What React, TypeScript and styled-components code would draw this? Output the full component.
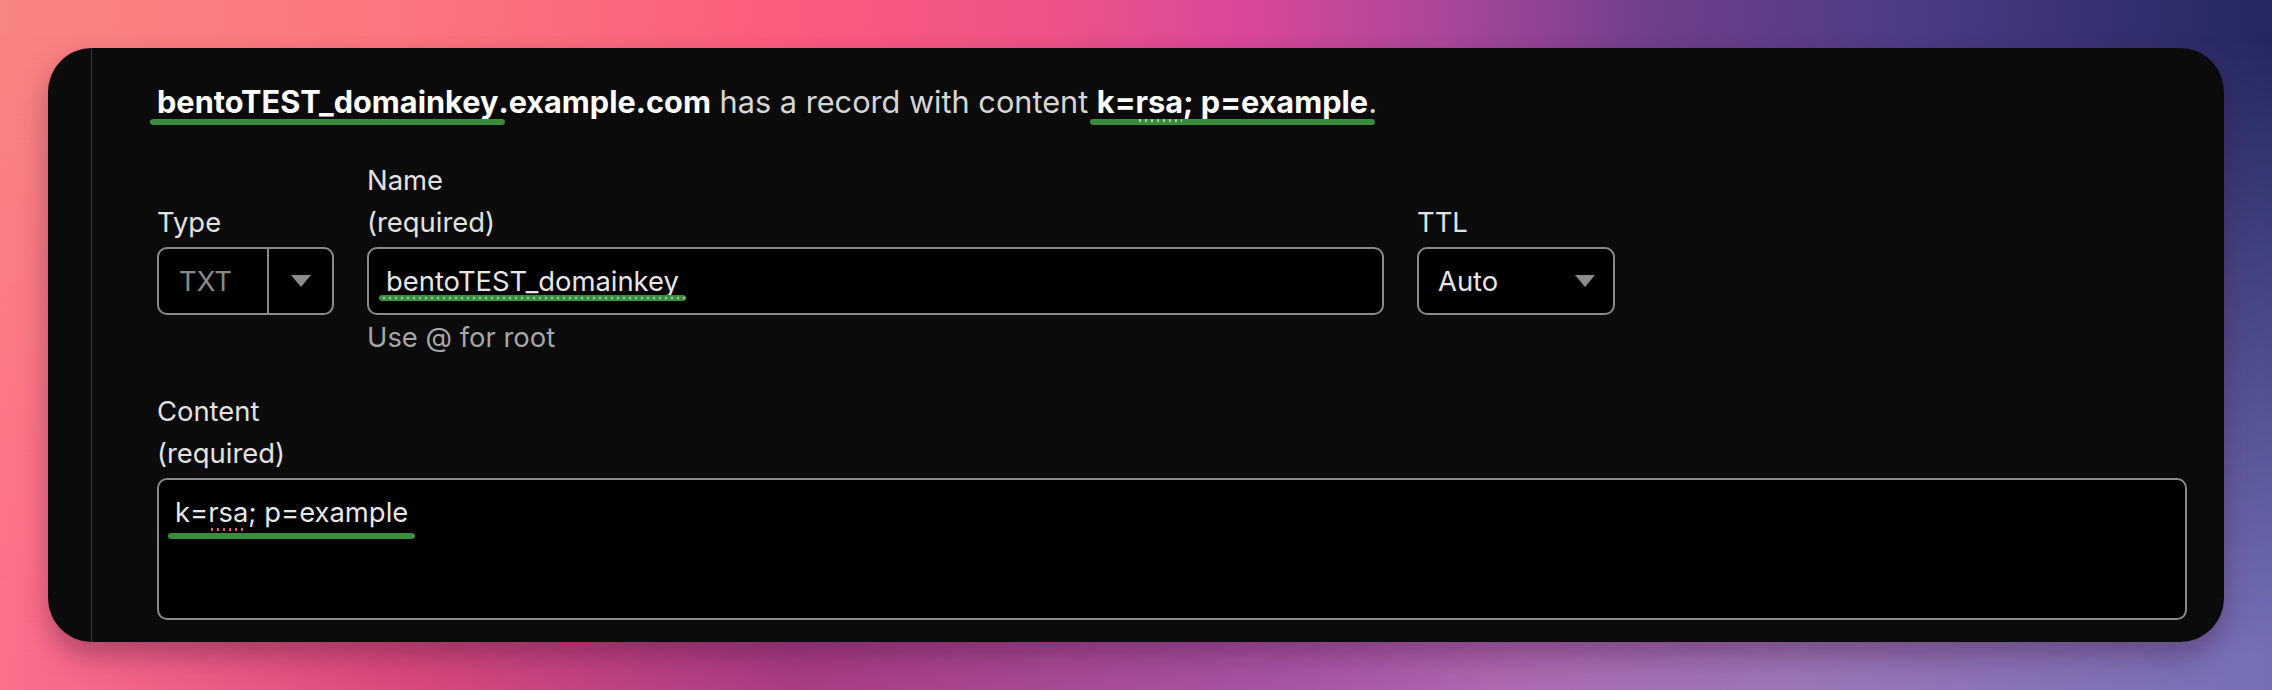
import React from "react";
import styled, { createGlobalStyle } from "styled-components";

const GlobalStyle = createGlobalStyle`
  html, body {
    margin: 0;
    padding: 0;
  }
  body {
    font-family: "Inter", "Noto Sans", "Liberation Sans", sans-serif;
    -webkit-font-smoothing: antialiased;
  }
`;

const Backdrop = styled.div`
  position: relative;
  width: 2272px;
  height: 690px;
  box-sizing: border-box;
  padding: 48px;
  background: linear-gradient(
    90deg,
    #f88580 0%,
    #fb757e 18%,
    #fb5b7d 35%,
    #ee5286 46%,
    #d9489a 55%,
    #a8479a 64%,
    #6e3f8a 73%,
    #4c3c85 84%,
    #232860 100%
  );

  &::before {
    content: "";
    position: absolute;
    inset: 0;
    background: linear-gradient(
      90deg,
      #fe6f8c 0%,
      #d9497d 18%,
      #a83d85 35%,
      #a855a5 57%,
      #ad68b0 66%,
      #9a76b6 79%,
      #7570b6 100%
    );
    -webkit-mask-image: linear-gradient(180deg, transparent 5%, #000 95%);
    mask-image: linear-gradient(180deg, transparent 5%, #000 95%);
  }
`;

const Card = styled.div`
  position: relative;
  z-index: 1;
  height: 100%;
  box-sizing: border-box;
  padding-left: 43px;
  background: #0b0b0b;
  border-radius: 44px;
  overflow: hidden;
  box-shadow: 0 14px 28px rgba(60, 10, 50, 0.35);
`;

const Panel = styled.div`
  height: 100%;
  box-sizing: border-box;
  border-left: 1px solid #3a3a3a;
  padding: 33px 37px 0 65px;
  font-size: 27.4px;
  line-height: 42px;
  color: #e2e2e2;
`;

const Headline = styled.p`
  margin: 0;
  font-size: 30.7px;
  color: #d6d6d6;
  white-space: nowrap;
`;

const Strong = styled.strong`
  color: #ffffff;
  font-weight: 700;
`;

const Marked = styled.span<{ $drop: number; $dotted?: boolean }>`
  position: relative;

  &::after {
    content: "";
    position: absolute;
    left: -7px;
    right: -7px;
    bottom: ${(p) => -p.$drop}px;
    height: 6px;
    border-radius: 3px;
    background: ${(p) =>
      p.$dotted
        ? "radial-gradient(circle, #86c98a 1.2px, transparent 1.7px) 2px 50% / 6px 6px repeat-x, #3a8c3e"
        : "#3a8c3e"};
  }
`;

const Spell = styled.span<{ $tone: string }>`
  position: relative;

  &::before {
    content: "";
    position: absolute;
    z-index: 1;
    left: 1px;
    right: 1px;
    bottom: -2px;
    height: 3px;
    background: radial-gradient(circle, ${(p) => p.$tone} 1.1px, transparent 1.5px) 0 0 / 6px 3px repeat-x;
  }
`;

const FieldGrid = styled.div`
  margin-top: 36px;
  display: grid;
  grid-template-columns: 177px 1017px 198px;
  column-gap: 33px;
`;

const Label = styled.label`
  display: block;
  align-self: end;
  margin-bottom: 4px;
  color: #e2e2e2;
`;

const Line = styled.span`
  display: block;
`;

const Box = styled.div`
  box-sizing: border-box;
  height: 68px;
  display: flex;
  align-items: center;
  background: #000;
  border: 2px solid #8a8a8a;
  border-radius: 10px;
  color: #e6e6e6;
`;

const SelectValue = styled.div<{ $muted?: boolean }>`
  flex: 1;
  padding-left: ${(p) => (p.$muted ? 20 : 19)}px;
  color: ${(p) => (p.$muted ? "#8a8a8a" : "#e6e6e6")};
`;

const Caret = styled.div<{ $split?: boolean }>`
  align-self: stretch;
  width: ${(p) => (p.$split ? "63px" : "auto")};
  display: flex;
  align-items: center;
  justify-content: center;
  border-left: ${(p) => (p.$split ? "2px solid #8a8a8a" : "none")};
  padding-right: ${(p) => (p.$split ? 0 : 18)}px;
`;

const TextValue = styled.div`
  padding-left: 17px;
  white-space: nowrap;
`;

const Hint = styled.div`
  grid-column: 2;
  margin-top: 1px;
  color: #a6a6a6;
`;

const ContentField = styled.div`
  margin-top: 32px;
`;

const Area = styled.div`
  box-sizing: border-box;
  height: 142px;
  padding: 11px 16px;
  background: #000;
  border: 2px solid #8a8a8a;
  border-radius: 10px;
  color: #e6e6e6;
`;

const Triangle = () => (
  <svg width="20" height="12" viewBox="0 0 20 12">
    <polygon points="0,0 20,0 10,12" fill="#8c8c8c" />
  </svg>
);

export default function App() {
  return (
    <>
      <GlobalStyle />
      <Backdrop>
        <Card>
          <Panel>
            <Headline>
              <Strong>
                <Marked $drop={5}>bentoTEST_domainkey</Marked>.example.com
              </Strong>{" "}
              has a record with content{" "}
              <Strong>
                <Marked $drop={5}>
                  k=<Spell $tone="#9fd49f">rsa</Spell>; p=example
                </Marked>
              </Strong>
              .
            </Headline>

            <FieldGrid>
              <Label>Type</Label>
              <Label>
                <Line>Name</Line>
                <Line>(required)</Line>
              </Label>
              <Label>TTL</Label>

              <Box>
                <SelectValue $muted>TXT</SelectValue>
                <Caret $split>
                  <Triangle />
                </Caret>
              </Box>
              <Box>
                <TextValue>
                  <Marked $drop={3} $dotted>
                    bentoTEST_domainkey
                  </Marked>
                </TextValue>
              </Box>
              <Box>
                <SelectValue>Auto</SelectValue>
                <Caret>
                  <Triangle />
                </Caret>
              </Box>

              <Hint>Use @ for root</Hint>
            </FieldGrid>

            <ContentField>
              <Label>
                <Line>Content</Line>
                <Line>(required)</Line>
              </Label>
              <Area>
                <Marked $drop={10}>
                  k=<Spell $tone="#e2607c">rsa</Spell>; p=example
                </Marked>
              </Area>
            </ContentField>
          </Panel>
        </Card>
      </Backdrop>
    </>
  );
}
